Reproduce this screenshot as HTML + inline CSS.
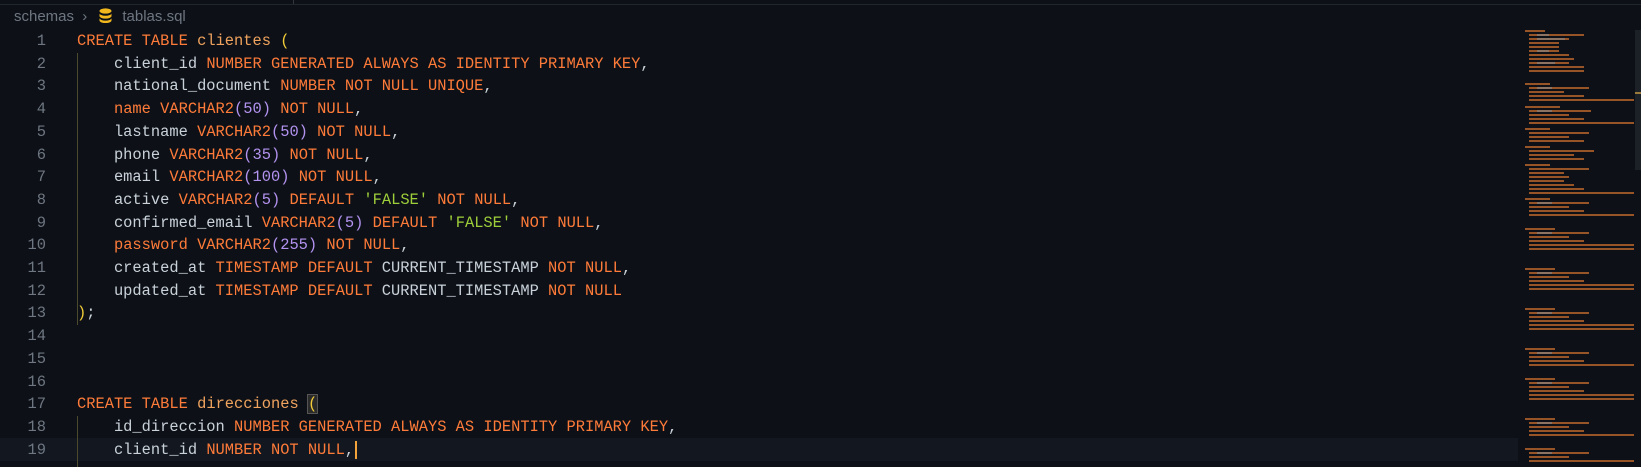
<!DOCTYPE html>
<html><head><style>
body{margin:0;width:1641px;height:467px;background:#0d1117;overflow:hidden;font-family:"Liberation Mono",monospace;position:relative}
.top{position:absolute;left:0;top:0;width:1641px;height:4px;background:#0d1117;border-bottom:1px solid #21262d}
.tab1{position:absolute;left:0;top:0;width:293px;height:4px;border-right:1px solid #30363d}
.bc{position:absolute;left:14px;top:8px;font:15px "Liberation Sans",sans-serif;color:#6e7681}
.code{position:absolute;left:0;top:30px;font-size:15.4px;line-height:22.7px;white-space:pre}
.ln{position:absolute;left:0;width:46px;text-align:right;color:#6e7681}
.l{position:absolute;left:77px;color:#c9d1d9}
.k{color:#ff7b39}.t{color:#f0a35e}.n{color:#b392f0}.s{color:#9ece3a}.y{color:#f2cc38}
.cur{position:absolute;left:0;top:438px;width:1518px;height:23px;background:#131820}
.g{position:absolute;left:77px;width:1px;background:#4b4a2c}
</style></head><body>
<div class="top"></div><div class="tab1"></div>
<div class="bc">schemas <span style="margin:0 4px">›</span> <svg width="13" height="15" viewBox="0 0 13 15" style="vertical-align:-2px;margin:0 10px 0 4px"><ellipse cx="6.5" cy="3" rx="6" ry="2.6" fill="#f2b81e"/><path d="M0.5 5.2v2.8a6 2.6 0 0 0 12 0V5.2a6 2.6 0 0 1-12 0z" fill="#f2b81e"/><path d="M0.5 10v2.5a6 2.6 0 0 0 12 0V10a6 2.6 0 0 1-12 0z" fill="#f2b81e"/></svg>tablas.sql</div>
<div class="cur"></div>
<div class="g" style="top:53px;height:272px"></div>
<div class="g" style="top:416px;height:51px"></div>
<div class="code">
<div class="ln" style="top:0">1</div><div class="ln" style="top:22.7px">2</div><div class="ln" style="top:45.4px">3</div><div class="ln" style="top:68.1px">4</div><div class="ln" style="top:90.8px">5</div><div class="ln" style="top:113.5px">6</div><div class="ln" style="top:136.2px">7</div><div class="ln" style="top:158.9px">8</div><div class="ln" style="top:181.6px">9</div><div class="ln" style="top:204.3px">10</div><div class="ln" style="top:227px">11</div><div class="ln" style="top:249.7px">12</div><div class="ln" style="top:272.4px">13</div><div class="ln" style="top:295.1px">14</div><div class="ln" style="top:317.8px">15</div><div class="ln" style="top:340.5px">16</div><div class="ln" style="top:363.2px">17</div><div class="ln" style="top:385.9px">18</div><div class="ln" style="top:408.6px">19</div>
<div class="l" style="top:0"><span class="k">CREATE TABLE</span> <span class="t">clientes</span> <span class="y">(</span></div>
<div class="l" style="top:22.7px">    client_id <span class="k">NUMBER GENERATED ALWAYS AS IDENTITY PRIMARY KEY</span>,</div>
<div class="l" style="top:45.4px">    national_document <span class="k">NUMBER NOT NULL UNIQUE</span>,</div>
<div class="l" style="top:68.1px">    <span class="k">name VARCHAR2</span><span class="n">(50)</span> <span class="k">NOT NULL</span>,</div>
<div class="l" style="top:90.8px">    lastname <span class="k">VARCHAR2</span><span class="n">(50)</span> <span class="k">NOT NULL</span>,</div>
<div class="l" style="top:113.5px">    phone <span class="k">VARCHAR2</span><span class="n">(35)</span> <span class="k">NOT NULL</span>,</div>
<div class="l" style="top:136.2px">    email <span class="k">VARCHAR2</span><span class="n">(100)</span> <span class="k">NOT NULL</span>,</div>
<div class="l" style="top:158.9px">    active <span class="k">VARCHAR2</span><span class="n">(5)</span> <span class="k">DEFAULT</span> <span class="s">'FALSE'</span> <span class="k">NOT NULL</span>,</div>
<div class="l" style="top:181.6px">    confirmed_email <span class="k">VARCHAR2</span><span class="n">(5)</span> <span class="k">DEFAULT</span> <span class="s">'FALSE'</span> <span class="k">NOT NULL</span>,</div>
<div class="l" style="top:204.3px">    <span class="k">password VARCHAR2</span><span class="n">(255)</span> <span class="k">NOT NULL</span>,</div>
<div class="l" style="top:227px">    created_at <span class="k">TIMESTAMP DEFAULT</span> CURRENT_TIMESTAMP <span class="k">NOT NULL</span>,</div>
<div class="l" style="top:249.7px">    updated_at <span class="k">TIMESTAMP DEFAULT</span> CURRENT_TIMESTAMP <span class="k">NOT NULL</span></div>
<div class="l" style="top:272.4px"><span class="y">)</span>;</div>
<div class="l" style="top:363.2px"><span class="k">CREATE TABLE</span> <span class="t">direcciones</span> <span class="y" style="outline:1px solid #555;background:#2a2a2a">(</span></div>
<div class="l" style="top:385.9px">    id_direccion <span class="k">NUMBER GENERATED ALWAYS AS IDENTITY PRIMARY KEY</span>,</div>
<div class="l" style="top:408.6px">    client_id <span class="k">NUMBER NOT NULL</span>,<span style="border-left:2px solid #f2a33a;margin-left:1px"></span></div>
</div>
<div style="position:absolute;left:1635px;top:30px;width:6px;height:140px;background:#1c2128"></div>
<div style="position:absolute;left:1635px;top:92px;width:6px;height:2px;background:#9a7a3a"></div>
<svg style="position:absolute;left:1525px;top:28px" width="110" height="439">
<g fill="#b0602a" opacity=".85">
<rect x="0" y="2" width="20" height="2"/><rect x="4" y="6" width="55" height="2"/><rect x="4" y="10" width="40" height="2"/><rect x="4" y="14" width="30" height="2"/><rect x="4" y="18" width="30" height="2"/><rect x="4" y="22" width="30" height="2"/><rect x="4" y="26" width="40" height="2"/><rect x="4" y="30" width="45" height="2"/><rect x="4" y="34" width="40" height="2"/><rect x="4" y="38" width="55" height="2"/><rect x="4" y="42" width="55" height="2"/>
<rect x="0" y="55" width="25" height="2"/><rect x="4" y="59" width="60" height="2"/><rect x="4" y="63" width="35" height="2"/><rect x="4" y="67" width="55" height="2"/><rect x="4" y="71" width="105" height="2"/>
<rect x="0" y="78" width="35" height="2"/><rect x="4" y="82" width="62" height="2"/><rect x="4" y="86" width="40" height="2"/><rect x="4" y="90" width="55" height="2"/><rect x="4" y="94" width="105" height="2"/>
<rect x="0" y="100" width="25" height="2"/><rect x="4" y="104" width="60" height="2"/><rect x="4" y="108" width="40" height="2"/><rect x="4" y="112" width="55" height="2"/>
<rect x="0" y="118" width="25" height="2"/><rect x="4" y="122" width="65" height="2"/><rect x="4" y="126" width="45" height="2"/><rect x="4" y="130" width="55" height="2"/>
<rect x="0" y="136" width="25" height="2"/><rect x="4" y="140" width="60" height="2"/><rect x="4" y="144" width="35" height="2"/><rect x="4" y="148" width="40" height="2"/><rect x="4" y="152" width="35" height="2"/><rect x="4" y="156" width="45" height="2"/><rect x="4" y="160" width="55" height="2"/><rect x="4" y="164" width="105" height="2"/>
<rect x="0" y="170" width="25" height="2"/><rect x="4" y="174" width="60" height="2"/><rect x="4" y="178" width="40" height="2"/><rect x="4" y="182" width="55" height="2"/><rect x="4" y="186" width="105" height="2"/>
<rect x="0" y="200" width="30" height="2"/><rect x="4" y="204" width="60" height="2"/><rect x="4" y="208" width="40" height="2"/><rect x="4" y="212" width="55" height="2"/><rect x="4" y="216" width="105" height="2"/><rect x="4" y="220" width="105" height="2"/>
<rect x="0" y="240" width="30" height="2"/><rect x="4" y="244" width="60" height="2"/><rect x="4" y="248" width="40" height="2"/><rect x="4" y="252" width="55" height="2"/><rect x="4" y="256" width="105" height="2"/><rect x="4" y="260" width="105" height="2"/>
<rect x="0" y="280" width="30" height="2"/><rect x="4" y="284" width="60" height="2"/><rect x="4" y="288" width="40" height="2"/><rect x="4" y="292" width="55" height="2"/><rect x="4" y="296" width="105" height="2"/><rect x="4" y="300" width="105" height="2"/>
<rect x="0" y="320" width="30" height="2"/><rect x="4" y="324" width="60" height="2"/><rect x="4" y="328" width="40" height="2"/><rect x="4" y="332" width="55" height="2"/><rect x="4" y="336" width="105" height="2"/>
<rect x="0" y="350" width="30" height="2"/><rect x="4" y="354" width="60" height="2"/><rect x="4" y="358" width="40" height="2"/><rect x="4" y="362" width="55" height="2"/><rect x="4" y="366" width="105" height="2"/><rect x="4" y="370" width="105" height="2"/>
<rect x="0" y="390" width="30" height="2"/><rect x="4" y="394" width="60" height="2"/><rect x="4" y="398" width="40" height="2"/><rect x="4" y="402" width="55" height="2"/><rect x="4" y="406" width="105" height="2"/>
<rect x="0" y="420" width="30" height="2"/><rect x="4" y="424" width="60" height="2"/><rect x="4" y="428" width="40" height="2"/><rect x="4" y="432" width="105" height="2"/>
</g>
<g fill="#888" opacity=".6">
<rect x="12" y="6" width="12" height="2"/><rect x="12" y="10" width="28" height="2"/><rect x="12" y="22" width="12" height="2"/><rect x="12" y="34" width="18" height="2"/><rect x="12" y="59" width="15" height="2"/><rect x="12" y="82" width="15" height="2"/><rect x="12" y="174" width="15" height="2"/><rect x="12" y="204" width="15" height="2"/><rect x="12" y="244" width="15" height="2"/><rect x="12" y="284" width="15" height="2"/><rect x="12" y="324" width="15" height="2"/><rect x="12" y="354" width="15" height="2"/><rect x="12" y="394" width="15" height="2"/><rect x="12" y="424" width="15" height="2"/>
</g>
</svg>
</body></html>
